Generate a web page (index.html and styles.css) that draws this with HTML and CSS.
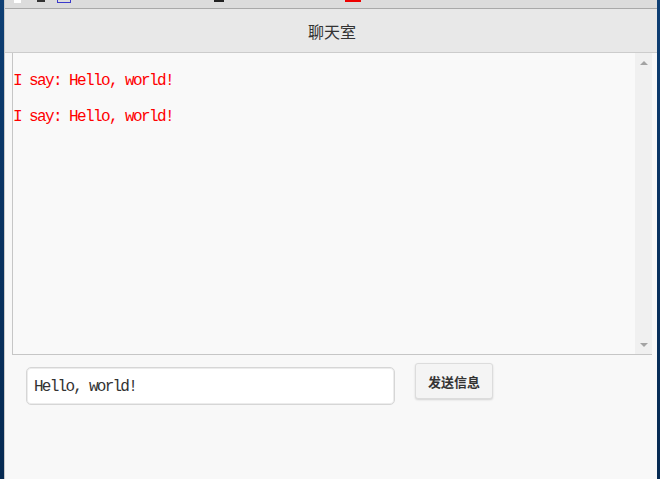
FILE: index.html
```html
<!DOCTYPE html>
<html lang="zh">
<head>
<meta charset="utf-8">
<title>聊天室</title>
<link rel="stylesheet" href="styles.css">
</head>
<body>
<div class="window">
  <div class="toolbar">
    <span class="tb tb-a"></span>
    <span class="tb tb-b"></span>
    <span class="tb tb-c"></span>
    <span class="tb tb-d"></span>
    <span class="tb tb-e"></span>
  </div>
  <header class="header">聊天室</header>
  <div class="chat">
    <div class="messages">
      <p class="msg">I say: Hello, world!</p>
      <p class="msg">I say: Hello, world!</p>
    </div>
    <div class="scrollbar">
      <span class="arrow up"></span>
      <span class="arrow down"></span>
    </div>
  </div>
  <div class="composer">
    <input class="input" type="text" value="Hello, world!">
    <button class="send">发送信息</button>
  </div>
</div>
</body>
</html>
```

FILE: styles.css
```css
html, body {
  margin: 0;
  padding: 0;
  height: 479px;
  overflow: hidden;
}
body {
  background: linear-gradient(180deg, #0e3f74 0%, #0a3463 40%, #062a52 100%);
  font-family: "Noto Sans CJK SC", "Noto Sans", sans-serif;
}
.window {
  margin: 0 3px 0 4px;
  height: 479px;
  background: #f8f8f8;
  border-left: 1px solid #c9c9c9;
  display: flex;
  flex-direction: column;
}
.toolbar {
  height: 8px;
  background: #dcdcdc;
  border-bottom: 1px solid #a9a9a9;
  position: relative;
  overflow: hidden;
}
.tb {
  position: absolute;
  top: 0;
  height: 3px;
}
.tb-a { left: 9px; width: 7px; background: #fff; }
.tb-b { left: 32px; width: 8px; background: #333; height: 2px; }
.tb-c { left: 52px; width: 12px; border: 1px solid #3a3acc; border-top: none; height: 2px; }
.tb-d { left: 209px; width: 10px; background: #222; height: 2px; }
.tb-e { left: 340px; width: 16px; background: #e00; height: 2px; }
.header {
  height: 43px;
  background: #e8e8e8;
  border-bottom: 1px solid #cccccc;
  display: flex;
  align-items: center;
  justify-content: center;
  font-size: 16px;
  color: #333;
  padding-left: 2px;
}
.chat {
  margin-left: 7px;
  margin-right: 5px;
  height: 301px;
  display: flex;
  background: #f9f9f9;
  border-left: 1px solid #c6c6c6;
  border-bottom: 1px solid #c6c6c6;
}
.messages {
  flex: 1;
  padding-top: 18px;
}
.msg {
  margin: 0 0 16px 0;
  font-family: "Liberation Mono", "DejaVu Sans Mono", monospace;
  font-size: 16px;
  letter-spacing: -1.6px;
  line-height: 20px;
  color: #ff0000;
}
.scrollbar {
  width: 17px;
  background: #f0f0f0;
  display: flex;
  flex-direction: column;
  justify-content: space-between;
  align-items: center;
  padding: 8px 0 7px;
}
.arrow {
  width: 0;
  height: 0;
  border-left: 4px solid transparent;
  border-right: 4px solid transparent;
}
.arrow.up { border-bottom: 4px solid #a3a3a3; }
.arrow.down { border-top: 4px solid #a3a3a3; }
.composer {
  display: flex;
  align-items: flex-start;
  gap: 20px;
  padding: 8px 0 0 21px;
}
.input {
  box-sizing: border-box;
  width: 369px;
  height: 38px;
  margin-top: 4px;
  border: 1px solid #d6d6d6;
  border-radius: 5px;
  box-shadow: inset 0 0 0 1px #ececec;
  background: #fff;
  padding: 2px 7px 0;
  font-family: "Liberation Mono", "DejaVu Sans Mono", monospace;
  font-size: 16px;
  letter-spacing: -1.75px;
  color: #333;
  outline: none;
}
.send {
  box-sizing: border-box;
  width: 78px;
  height: 36px;
  background: #f4f4f4;
  border: 1px solid #dcdcdc;
  border-radius: 3px;
  box-shadow: 0 1px 2px rgba(0,0,0,0.15);
  font-family: "Noto Sans CJK SC", sans-serif;
  font-size: 13px;
  font-weight: bold;
  color: #333;
  padding: 0;
}
```
